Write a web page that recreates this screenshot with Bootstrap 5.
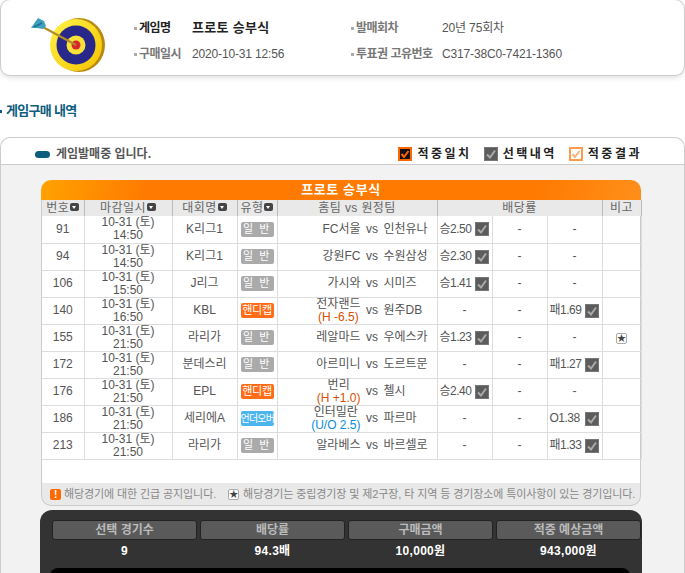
<!DOCTYPE html>
<html lang="ko">
<head>
  <meta charset="UTF-8" />
  <meta name="viewport" content="width=device-width, initial-scale=1.0" />
  <title>게임구매 내역</title>
  <link href="https://cdn.jsdelivr.net/npm/bootstrap@5.3.2/dist/css/bootstrap.min.css" rel="stylesheet" />

  <style>
    html, body {
      height: 573px;
      overflow: hidden;
    }

    body {
      background-color: #fff;
      color: #555;
      font-family: "Liberation Sans", "Noto Sans CJK KR", sans-serif;
      font-size: 12px;
      line-height: 14px;
    }

    .info-box {
      height: 77px;
      margin-top: -1px;
      background-color: #fff;
      border: 1px solid #ccc;
      border-radius: 10px;
      box-shadow: 0 2px 5px rgba(0, 0, 0, 0.12);
      padding-left: 30px;
    }

    .target-icon {
      width: 90px;
      height: 68px;
      flex: none;
    }

    .info-grid {
      display: grid;
      grid-template-columns: 58px 159px 91px auto;
      grid-auto-rows: 26px;
      align-items: center;
      margin-left: 13px;
      padding-top: 7px;
      letter-spacing: -0.15px;
    }

    .info-label {
      color: #777;
      font-weight: 700;
      letter-spacing: -0.5px;
    }

    .info-label::before {
      content: "";
      display: inline-block;
      width: 3px;
      height: 3px;
      margin-right: 2px;
      vertical-align: middle;
      background-color: #aaa;
    }

    .info-name {
      color: #222;
    }

    .info-title {
      color: #222;
      font-size: 13px;
      font-weight: 700;
      letter-spacing: 0.3px;
    }

    .section-title {
      height: 61px;
      padding-top: 28px;
      color: #0e5c7e;
      font-size: 13px;
      font-weight: 700;
      letter-spacing: -0.7px;
    }

    .section-title::before {
      content: "";
      display: inline-block;
      width: 2px;
      height: 3px;
      margin-right: 4px;
      vertical-align: middle;
      background-color: #0e5c7e;
    }

    .sale-box {
      background-color: #f2f2f2;
      border: 1px solid #ccc;
      border-bottom: 0;
      border-radius: 10px 10px 0 0;
      height: 440px;
    }

    .sale-head {
      height: 27px;
      background-color: #fff;
      border-bottom: 1px solid #ccc;
      border-radius: 10px 10px 0 0;
      padding: 6px 42px 0 34px;
    }

    .sale-pill {
      display: inline-block;
      width: 15px;
      height: 7px;
      margin-right: 6px;
      border-radius: 4px;
      background-color: #0e5c7e;
    }

    .sale-text {
      color: #555;
      font-weight: 700;
    }

    .legend-item {
      color: #222;
      font-weight: 700;
      letter-spacing: 2.5px;
      margin-left: 5px;
    }

    .legend-gap {
      margin-right: 12px;
    }

    .check-box {
      display: inline-block;
      flex: none;
      width: 14px;
      height: 14px;
    }

    .board {
      width: 600px;
      margin: 15px 0 0 40px;
    }

    .board-title {
      height: 20px;
      border-radius: 10px 10px 0 0;
      background: linear-gradient(100deg, #ffa200 0, #ff7a00 18%, #ff7a00 82%, #ff8f1a 100%);
      color: #fff;
      font-size: 13px;
      font-weight: 700;
      line-height: 20px;
      letter-spacing: 0.6px;
    }

    .board-body {
      height: 283px;
      background-color: #fff;
      border-left: 1px solid #ccc;
      border-right: 1px solid #ccc;
    }

    .game-table {
      table-layout: fixed;
      width: 599px;
      margin: 0;
      font-size: 12px;
      line-height: 13px;
      --bs-table-color: #555;
    }

    .game-table th,
    .game-table td {
      padding: 0;
      text-align: center;
      vertical-align: middle;
      border: 1px solid #ddd;
      border-width: 0 1px 1px 0;
    }

    .game-table th {
      height: 16px;
      background-color: #e9e9e9;
      color: #666;
      font-weight: 400;
      letter-spacing: 0.4px;
      line-height: 14px;
      border-bottom: 0;
      border-right: 1px solid #bbb;
      white-space: nowrap;
    }

    .game-table td {
      height: 27px;
    }

    .sort-mark {
      display: inline-block;
      width: 9px;
      height: 8px;
      margin-left: 1px;
      border-radius: 2px;
      background-color: #444;
      position: relative;
      top: -1px;
    }

    .sort-mark::after {
      content: "";
      position: absolute;
      left: 2px;
      top: 3px;
      border: 2.5px solid transparent;
      border-top: 3px solid #fff;
      border-bottom: 0;
    }

    .type-tag {
      display: inline-block;
      width: 33px;
      height: 15px;
      border-radius: 2px;
      color: #fff;
      font-size: 11px;
      line-height: 15px;
      white-space: nowrap;
    }

    .type-plain {
      background-color: #aaa;
      letter-spacing: 1.5px;
    }

    .type-handicap {
      background-color: #ff6c17;
      letter-spacing: -0.3px;
    }

    .type-over {
      background-color: #4cb5ee;
      font-size: 10px;
      letter-spacing: -0.8px;
    }

    .home-team {
      width: 83px;
      flex: none;
      text-align: right;
      white-space: nowrap;
    }

    .vs-mark {
      width: 23px;
      flex: none;
      text-align: center;
    }

    .away-team {
      white-space: nowrap;
    }

    .team-stack {
      display: inline-block;
      text-align: center;
      line-height: 13px;
    }

    .line-red,
    .line-blue {
      display: block;
      height: 13px;
    }

    .line-red {
      color: #d65000;
    }

    .line-blue {
      color: #0a8fd8;
    }

    .odds-cell {
      padding: 0 3px 0 2px !important;
      letter-spacing: -0.5px;
    }

    .star-mark {
      display: inline-block;
      flex: none;
      width: 11px;
      height: 11px;
      border: 1px solid #aaa;
      border-radius: 2px;
      background-color: #fff;
      color: #444;
      font-size: 9px;
      line-height: 9px;
      text-align: center;
    }

    .board-foot {
      height: 23px;
      background-color: #e9e9e9;
      border: 1px solid #ccc;
      border-top: 0;
      border-radius: 0 0 10px 10px;
      padding-left: 8px;
      color: #888;
      font-size: 11px;
      line-height: 21px;
      letter-spacing: -0.1px;
      white-space: nowrap;
    }

    .notice-mark {
      display: inline-block;
      flex: none;
      width: 11px;
      height: 11px;
      margin-right: 3px;
      border-radius: 2px;
      background-color: #ff6a00;
      color: #fff;
      font-size: 10px;
      font-weight: 700;
      line-height: 11px;
      text-align: center;
    }

    .foot-gap {
      margin-right: 12px;
    }

    .summary {
      width: 602px;
      height: 80px;
      margin: 4px 0 0 39px;
      padding: 10px 1px 0 12px;
      border-radius: 12px 12px 0 0;
      background-color: #333;
    }

    .summary-grid {
      display: grid;
      grid-template-columns: 145px 145px 145px 145px;
      gap: 0 3px;
      text-align: center;
    }

    .summary-label {
      height: 20px;
      border: 1px solid #222;
      border-radius: 3px;
      background-color: #5a5a5a;
      color: #bbb;
      font-weight: 700;
      line-height: 18px;
    }

    .summary-value {
      height: 28px;
      color: #fff;
      font-size: 12px;
      font-weight: 700;
      line-height: 22px;
      letter-spacing: 0.3px;
    }

    .summary-black {
      width: 580px;
      height: 30px;
      margin-left: -2px;
      border-radius: 8px 8px 0 0;
      background-color: #000;
    }
  </style>
</head>
<body class="m-0">
  <svg width="0" height="0" class="position-absolute">
    <symbol id="chk" viewBox="0 0 14 14">
      <rect width="14" height="14" fill="#5c5c5c" />
      <rect x=".5" y=".5" width="13" height="13" fill="none" stroke="#777" />
      <path d="M3 7.5l3 3 5-7" fill="none" stroke="#aaa" stroke-width="2" />
    </symbol>
  </svg>

  <!-- Game info -->
  <div class="info-box d-flex align-items-center">
    <svg class="target-icon" viewBox="0 0 90 68">
      <defs>
        <linearGradient id="ringGold" x1="0" y1="0" x2="1" y2="1">
          <stop offset="0" stop-color="#fff24a" />
          <stop offset="1" stop-color="#f5c400" />
        </linearGradient>
      </defs>
      <ellipse cx="48" cy="41" rx="26" ry="27" fill="#b98a10" />
      <circle cx="45" cy="41" r="26" fill="url(#ringGold)" />
      <circle cx="45" cy="41" r="19.5" fill="#27288a" />
      <circle cx="45" cy="41" r="9.5" fill="#f8e23a" />
      <circle cx="45" cy="41" r="4.5" fill="#d9262e" />
      <path d="M10 22L45 41" stroke="#b08c24" stroke-width="2" />
      <path d="M0 24l7-10 6 3 2 5-3 3-6-1z" fill="#3f9fbe" />
      <path d="M3 23l8-4" stroke="#1f6f8c" stroke-width="1.5" />
    </svg>
    <div class="info-grid">
      <div class="info-label info-name">게임명</div>
      <div class="info-title">프로토 승부식</div>
      <div class="info-label">발매회차</div>
      <div>20년 75회차</div>
      <div class="info-label">구매일시</div>
      <div>2020-10-31 12:56</div>
      <div class="info-label">투표권 고유번호</div>
      <div>C317-38C0-7421-1360</div>
    </div>
  </div>

  <div class="section-title">게임구매 내역</div>

  <div class="sale-box">
    <div class="sale-head d-flex align-items-center justify-content-between">
      <div class="d-flex align-items-center">
        <span class="sale-pill"></span>
        <span class="sale-text">게임발매중 입니다.</span>
      </div>
      <div class="d-flex align-items-center">
        <svg class="check-box" viewBox="0 0 14 14">
          <rect width="14" height="14" fill="#ff6600" />
          <rect x="2" y="2" width="10" height="10" fill="#111" />
          <path d="M3.5 7l2.5 3 4.5-6" fill="none" stroke="#ff6600" stroke-width="2" />
        </svg>
        <span class="legend-item legend-gap">적중일치</span>
        <svg class="check-box"><use href="#chk" /></svg>
        <span class="legend-item legend-gap">선택내역</span>
        <svg class="check-box" viewBox="0 0 14 14">
          <rect width="14" height="14" fill="#ff9a4d" />
          <rect x="2" y="2" width="10" height="10" fill="#fff" />
          <path d="M3.5 7l2.5 3 4.5-6" fill="none" stroke="#ffb27a" stroke-width="2" />
        </svg>
        <span class="legend-item">적중결과</span>
      </div>
    </div>

    <div class="board">
      <div class="board-title text-center">프로토 승부식</div>
      <div class="board-body">
        <table class="table game-table">
          <colgroup>
            <col style="width:42px" />
            <col style="width:88px" />
            <col style="width:65px" />
            <col style="width:40px" />
            <col style="width:160px" />
            <col style="width:55px" />
            <col style="width:55px" />
            <col style="width:55px" />
            <col style="width:39px" />
          </colgroup>
          <thead>
            <tr>
              <th>번호<span class="sort-mark"></span></th>
              <th>마감일시<span class="sort-mark"></span></th>
              <th>대회명<span class="sort-mark"></span></th>
              <th>유형<span class="sort-mark"></span></th>
              <th>홈팀 vs 원정팀</th>
              <th colspan="3">배당률</th>
              <th>비고</th>
            </tr>
          </thead>
          <tbody>
            <tr>
              <td>91</td><td>10-31 (토)<br />14:50</td><td>K리그1</td>
              <td><span class="type-tag type-plain">일 반</span></td>
              <td><div class="d-flex align-items-center"><div class="home-team">FC서울</div><div class="vs-mark">vs</div><div class="away-team">인천유나</div></div></td>
              <td class="odds-cell"><div class="d-flex align-items-center justify-content-between">승2.50<svg class="check-box"><use href="#chk" /></svg></div></td><td>-</td><td>-</td><td></td>
            </tr>
            <tr>
              <td>94</td><td>10-31 (토)<br />14:50</td><td>K리그1</td>
              <td><span class="type-tag type-plain">일 반</span></td>
              <td><div class="d-flex align-items-center"><div class="home-team">강원FC</div><div class="vs-mark">vs</div><div class="away-team">수원삼성</div></div></td>
              <td class="odds-cell"><div class="d-flex align-items-center justify-content-between">승2.30<svg class="check-box"><use href="#chk" /></svg></div></td><td>-</td><td>-</td><td></td>
            </tr>
            <tr>
              <td>106</td><td>10-31 (토)<br />15:50</td><td>J리그</td>
              <td><span class="type-tag type-plain">일 반</span></td>
              <td><div class="d-flex align-items-center"><div class="home-team">가시와</div><div class="vs-mark">vs</div><div class="away-team">시미즈</div></div></td>
              <td class="odds-cell"><div class="d-flex align-items-center justify-content-between">승1.41<svg class="check-box"><use href="#chk" /></svg></div></td><td>-</td><td>-</td><td></td>
            </tr>
            <tr>
              <td>140</td><td>10-31 (토)<br />16:50</td><td>KBL</td>
              <td><span class="type-tag type-handicap">핸디캡</span></td>
              <td><div class="d-flex align-items-center"><div class="home-team"><span class="team-stack">전자랜드<span class="line-red">(H -6.5)</span></span></div><div class="vs-mark">vs</div><div class="away-team">원주DB</div></div></td>
              <td>-</td><td>-</td>
              <td class="odds-cell"><div class="d-flex align-items-center justify-content-between">패1.69<svg class="check-box"><use href="#chk" /></svg></div></td><td></td>
            </tr>
            <tr>
              <td>155</td><td>10-31 (토)<br />21:50</td><td>라리가</td>
              <td><span class="type-tag type-plain">일 반</span></td>
              <td><div class="d-flex align-items-center"><div class="home-team">레알마드</div><div class="vs-mark">vs</div><div class="away-team">우에스카</div></div></td>
              <td class="odds-cell"><div class="d-flex align-items-center justify-content-between">승1.23<svg class="check-box"><use href="#chk" /></svg></div></td><td>-</td><td>-</td>
              <td><span class="star-mark">★</span></td>
            </tr>
            <tr>
              <td>172</td><td>10-31 (토)<br />21:50</td><td>분데스리</td>
              <td><span class="type-tag type-plain">일 반</span></td>
              <td><div class="d-flex align-items-center"><div class="home-team">아르미니</div><div class="vs-mark">vs</div><div class="away-team">도르트문</div></div></td>
              <td>-</td><td>-</td>
              <td class="odds-cell"><div class="d-flex align-items-center justify-content-between">패1.27<svg class="check-box"><use href="#chk" /></svg></div></td><td></td>
            </tr>
            <tr>
              <td>176</td><td>10-31 (토)<br />21:50</td><td>EPL</td>
              <td><span class="type-tag type-handicap">핸디캡</span></td>
              <td><div class="d-flex align-items-center"><div class="home-team"><span class="team-stack">번리<span class="line-red">(H +1.0)</span></span></div><div class="vs-mark">vs</div><div class="away-team">첼시</div></div></td>
              <td class="odds-cell"><div class="d-flex align-items-center justify-content-between">승2.40<svg class="check-box"><use href="#chk" /></svg></div></td><td>-</td><td>-</td><td></td>
            </tr>
            <tr>
              <td>186</td><td>10-31 (토)<br />21:50</td><td>세리에A</td>
              <td><span class="type-tag type-over">언더오버</span></td>
              <td><div class="d-flex align-items-center"><div class="home-team"><span class="team-stack">인터밀란<span class="line-blue">(U/O 2.5)</span></span></div><div class="vs-mark">vs</div><div class="away-team">파르마</div></div></td>
              <td>-</td><td>-</td>
              <td class="odds-cell"><div class="d-flex align-items-center justify-content-between">O1.38<svg class="check-box"><use href="#chk" /></svg></div></td><td></td>
            </tr>
            <tr>
              <td>213</td><td>10-31 (토)<br />21:50</td><td>라리가</td>
              <td><span class="type-tag type-plain">일 반</span></td>
              <td><div class="d-flex align-items-center"><div class="home-team">알라베스</div><div class="vs-mark">vs</div><div class="away-team">바르셀로</div></div></td>
              <td>-</td><td>-</td>
              <td class="odds-cell"><div class="d-flex align-items-center justify-content-between">패1.33<svg class="check-box"><use href="#chk" /></svg></div></td><td></td>
            </tr>
          </tbody>
        </table>
      </div>
      <div class="board-foot d-flex align-items-center">
        <span class="notice-mark">!</span>
        <span class="foot-gap">해당경기에 대한 긴급 공지입니다.</span>
        <span class="star-mark me-1">★</span>
        <span>해당경기는 중립경기장 및 제2구장, 타 지역 등 경기장소에 특이사항이 있는 경기입니다.</span>
      </div>
    </div>

    <div class="summary">
      <div class="summary-grid">
        <div class="summary-label">선택 경기수</div>
        <div class="summary-label">배당률</div>
        <div class="summary-label">구매금액</div>
        <div class="summary-label">적중 예상금액</div>
        <div class="summary-value">9</div>
        <div class="summary-value">94.3배</div>
        <div class="summary-value">10,000원</div>
        <div class="summary-value">943,000원</div>
      </div>
      <div class="summary-black"></div>
    </div>
  </div>

  <script src="https://cdn.jsdelivr.net/npm/bootstrap@5.3.2/dist/js/bootstrap.bundle.min.js"></script>
</body>
</html>
